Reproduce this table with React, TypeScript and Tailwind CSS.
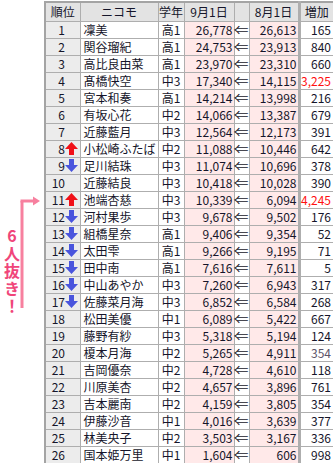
import React from 'react';

type Row = [number, '' | 'up' | 'down', string, string, string, string, string, 'red' | 'gray' | ''];

const rows: Row[] = [
    [1, '', '凜美', '高1', '26,778', '26,613', '165', ''],
    [2, '', '関谷瑠紀', '高1', '24,753', '23,913', '840', ''],
    [3, '', '高比良由菜', '高1', '23,970', '23,310', '660', ''],
    [4, '', '髙橋快空', '中3', '17,340', '14,115', '3,225', 'red'],
    [5, '', '宮本和奏', '高1', '14,214', '13,998', '216', ''],
    [6, '', '有坂心花', '中2', '14,066', '13,387', '679', ''],
    [7, '', '近藤藍月', '中3', '12,564', '12,173', '391', ''],
    [8, 'up', '小松崎ふたば', '中2', '11,088', '10,446', '642', ''],
    [9, 'down', '足川結珠', '中3', '11,074', '10,696', '378', ''],
    [10, '', '近藤結良', '中3', '10,418', '10,028', '390', ''],
    [11, 'up', '池端杏慈', '中3', '10,339', '6,094', '4,245', 'red'],
    [12, 'down', '河村果歩', '中3', '9,678', '9,502', '176', ''],
    [13, 'down', '組橋星奈', '高1', '9,406', '9,354', '52', ''],
    [14, 'down', '太田雫', '高1', '9,266', '9,195', '71', ''],
    [15, 'down', '田中南', '高1', '7,616', '7,611', '5', ''],
    [16, 'down', '中山あやか', '中3', '7,260', '6,943', '317', ''],
    [17, 'down', '佐藤菜月海', '中3', '6,852', '6,584', '268', ''],
    [18, '', '松田美優', '中1', '6,089', '5,422', '667', ''],
    [19, '', '藤野有紗', '中3', '5,318', '5,194', '124', ''],
    [20, '', '榎本月海', '中2', '5,265', '4,911', '354', 'gray'],
    [21, '', '吉岡優奈', '中2', '4,728', '4,610', '118', ''],
    [22, '', '川原美杏', '中2', '4,657', '3,896', '761', ''],
    [23, '', '吉本麗南', '中2', '4,159', '3,805', '354', ''],
    [24, '', '伊藤沙音', '中1', '4,016', '3,639', '377', ''],
    [25, '', '林美央子', '中2', '3,503', '3,167', '336', ''],
    [26, '', '国本姫万里', '中1', '1,604', '606', '998', ''],
];

function RankArrow({ dir }: { dir: 'up' | 'down' }) {
    if (dir === 'up') {
        return (
            <svg width="13" height="13" viewBox="0 0 13 13" className="shrink-0">
                <path d="M6.5 0 L13 7 L9 7 L9 13 L4 13 L4 7 L0 7 Z" fill="#f01018" />
            </svg>
        );
    }
    return (
        <svg width="13" height="13" viewBox="0 0 13 13" className="shrink-0">
            <path d="M4 0 H9 V6 H13 L6.5 13 L0 6 H4 Z" fill="#4a55dd" />
        </svg>
    );
}

export default function App() {
    const cell = 'border border-[#aeaeae] p-0 h-[17px] leading-[16px]';
    return (
        <div
            className="flex w-[333px] h-[463px] bg-white text-[#15152a] text-[12px]"
            style={{ fontFamily: '"Noto Sans CJK JP", "Noto Sans", sans-serif' }}
        >
            {/* annotation */}
            <div className="w-[44px] shrink-0 pt-[196px] relative">
                <svg width="44" height="114" viewBox="0 0 44 114">
                    <path d="M22 5 V112" stroke="#f7809f" strokeWidth="3" fill="none" />
                    <path d="M20.5 5 H34" stroke="#f7809f" strokeWidth="3" fill="none" />
                    <path d="M33 0.5 L40 5 L33 9.5 Z" fill="#f7809f" />
                </svg>
                <div className="absolute left-[4px] top-[228px] text-[16px] leading-[16px] tracking-[1.5px] font-bold text-[#f0457a] [writing-mode:vertical-rl] [text-orientation:upright]">
                    6人抜き！
                </div>
            </div>

            {/* table */}
            <div className="pt-[1px]">
                <table className="border-collapse table-fixed w-[289px] border-2 border-[#a4a4a4]">
                    <colgroup>
                        <col className="w-[35px]" />
                        <col className="w-[78px]" />
                        <col className="w-[26px]" />
                        <col className="w-[50px]" />
                        <col className="w-[15px]" />
                        <col className="w-[50px]" />
                        <col className="w-[35px]" />
                    </colgroup>
                    <thead>
                        <tr className="bg-[#e3e3e3]">
                            <th className={`${cell} h-[19px] font-normal text-center`}>順位</th>
                            <th className={`${cell} font-normal text-center`}>ニコモ</th>
                            <th className={`${cell} font-normal text-center`}>学年</th>
                            <th className={`${cell} font-normal text-center`}>9月1日</th>
                            <th className={`${cell} font-normal`}></th>
                            <th className={`${cell} font-normal text-center border-r-[3px] border-r-double`}>8月1日</th>
                            <th className={`${cell} font-normal text-center`}>増加</th>
                        </tr>
                    </thead>
                    <tbody>
                        {rows.map(([rank, dir, name, grade, sep, aug, inc, tone]) => (
                            <tr key={rank}>
                                <td className={`${cell} bg-[#ececec]`}>
                                    <div className="flex items-center h-[16px]">
                                        <span className="w-[19px] text-right">{rank}</span>
                                        {dir && <RankArrow dir={dir} />}
                                    </div>
                                </td>
                                <td className={`${cell} pl-[3px] whitespace-nowrap overflow-hidden`}>{name}</td>
                                <td className={`${cell} text-center`}>{grade}</td>
                                <td className={`${cell} bg-[#ffe9e9] text-right pr-[1px]`}>{sep}</td>
                                <td className={`${cell} text-center`}>
                                    <span className="inline-block scale-x-125">⇐</span>
                                </td>
                                <td className={`${cell} bg-[#ffe9e9] text-right pr-[1px] border-r-[3px] border-r-double`}>{aug}</td>
                                <td
                                    className={`${cell} text-right pr-[2px] ${tone === 'red' ? 'text-[#ff1010]' : tone === 'gray' ? 'text-[#5c5468]' : ''}`}
                                >
                                    {inc}
                                </td>
                            </tr>
                        ))}
                    </tbody>
                </table>
            </div>
        </div>
    );
}
